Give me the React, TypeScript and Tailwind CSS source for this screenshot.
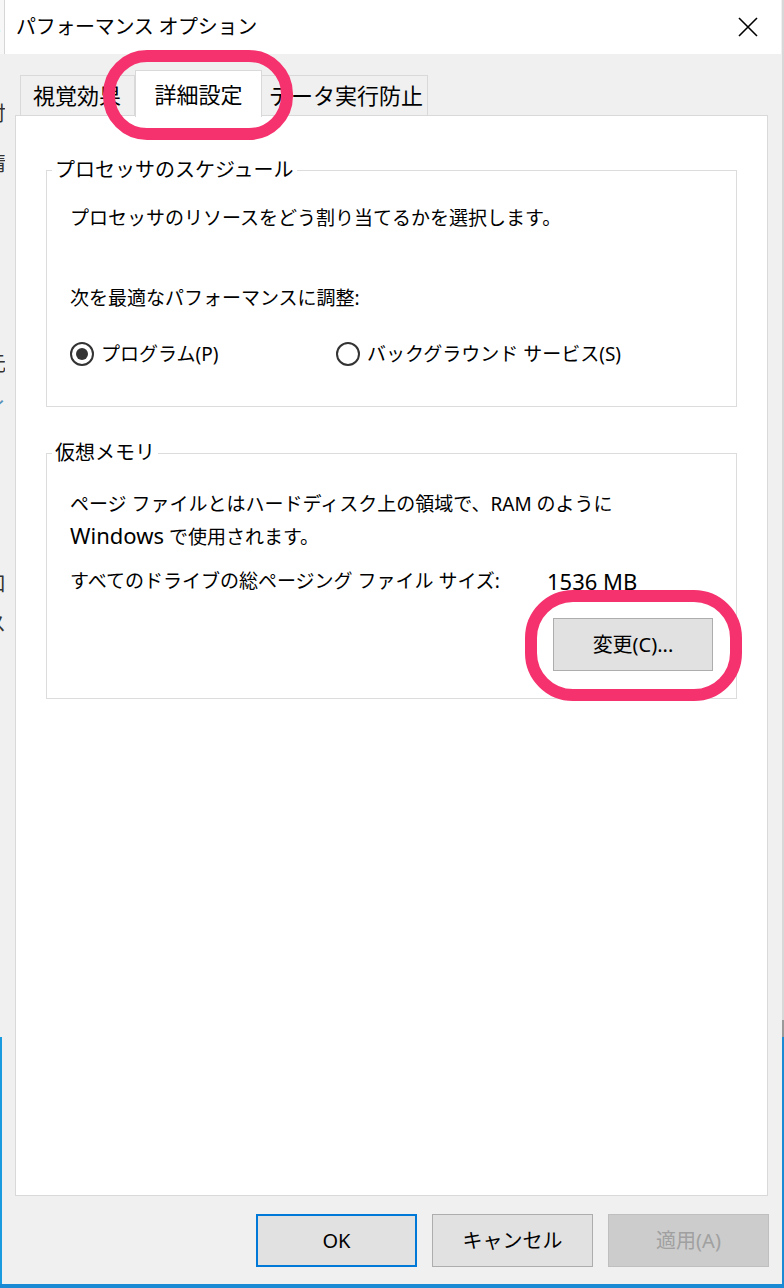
import React from "react";

const font = { fontFamily: '"Noto Sans", "Noto Sans CJK JP", sans-serif' };

function Radio({ checked, label }: { checked?: boolean; label: string }) {
  return (
    <div className="flex items-center gap-[7px]">
      <span className="w-[24px] h-[24px] rounded-full border-2 border-[#333333] bg-white flex items-center justify-center">
        {checked && <span className="w-[12px] h-[12px] rounded-full bg-[#333333]" />}
      </span>
      <span className="whitespace-nowrap">{label}</span>
    </div>
  );
}

function Group({ title, children, className }: { title: string; children: React.ReactNode; className?: string }) {
  return (
    <fieldset className={"border border-[#dcdcdc] mx-[30px] px-[23px] " + (className ?? "")}>
      <legend className="-ml-[18px] px-[3px] text-[20px] leading-[28px] bg-white whitespace-nowrap">{title}</legend>
      {children}
    </fieldset>
  );
}

function DlgButton({ children, variant }: { children: React.ReactNode; variant?: "default" | "disabled" }) {
  const cls =
    variant === "default"
      ? "border-2 border-[#0078d7] bg-[#e1e1e1] text-black"
      : variant === "disabled"
      ? "border border-[#bfbfbf] bg-[#cccccc] text-[#a0a0a0]"
      : "border border-[#adadad] bg-[#e1e1e1] text-black";
  return (
    <div className={"w-[161px] h-[53px] flex items-center justify-center text-[20px] " + cls}>{children}</div>
  );
}

export default function App() {
  return (
    <div className="w-[784px] h-[1288px] flex flex-col overflow-hidden bg-[#f0f0f0] text-black" style={font}>
      <div className="flex flex-row h-[1284px]">
        {/* background window peeking on the left */}
        <div className="w-[5px] flex flex-col">
          <div className="h-[54px] bg-[#f7f7f7] border-r border-[#d6d6d6] overflow-hidden flex items-center">
            <span className="text-[14px] leading-none -ml-[3px]">.</span>
          </div>
          <div className="h-[983px] bg-[#f0f0f0] overflow-hidden flex flex-col text-[20px] leading-[20px] text-[#333]">
            <span className="h-[50px]" />
            <span className="-ml-[14px]">付</span>
            <span className="h-[30px]" />
            <span className="-ml-[14px]">情</span>
            <span className="h-[180px]" />
            <span className="-ml-[14px]">元</span>
            <span className="h-[25px]" />
            <span className="-ml-[14px] text-[#5a8fb8]">イ</span>
            <span className="h-[155px]" />
            <span className="-ml-[14px]">口</span>
            <span className="h-[20px]" />
            <span className="-ml-[14px]">ス</span>
          </div>
          <div className="flex-1 bg-[#f0f0f0] border-l-2 border-[#1a9be0]" />
        </div>

        {/* dialog */}
        <div className="w-[776px] flex flex-col">
          {/* title bar */}
          <div className="h-[54px] bg-white flex items-center justify-between pl-[11px] pr-[23px]">
            <span className="text-[20px] tracking-[-0.3px] whitespace-nowrap">パフォーマンス オプション</span>
            <svg width="20" height="20" viewBox="0 0 20 20" fill="none" stroke="#000" strokeWidth="1.6">
              <path d="M1 1 L19 19 M19 1 L1 19" />
            </svg>
          </div>

          <div className="flex-1 flex flex-col relative">
            {/* tab strip */}
            <div className="h-[61px] flex items-end pl-[15px] text-[22px]">
              <div className="w-[115px] h-[40px] border border-b-0 border-[#d9d9d9] bg-[#f0f0f0] flex items-center pl-[12px] whitespace-nowrap">
                視覚効果
              </div>
              <div className="w-[127px] h-[47px] border border-b-0 border-[#d9d9d9] bg-white flex items-center justify-center -mb-[2px] relative z-10 whitespace-nowrap">
                詳細設定
              </div>
              <div className="w-[166px] h-[40px] border border-b-0 border-l-0 border-[#d9d9d9] bg-[#f0f0f0] flex items-center pl-[7px] whitespace-nowrap">
                データ実行防止
              </div>
            </div>

            {/* tab panel */}
            <div className="ml-[10px] w-[753px] h-[1081px] border border-[#d9d9d9] bg-white text-[19px] flex flex-col">
              <Group title="プロセッサのスケジュール" className="mt-[40px] h-[251px]">
                <div className="mt-[20px] leading-[28px] whitespace-nowrap">プロセッサのリソースをどう割り当てるかを選択します。</div>
                <div className="mt-[52px] leading-[28px] whitespace-nowrap">次を最適なパフォーマンスに調整:</div>
                <div className="mt-[28px] h-[28px] flex items-center">
                  <div className="w-[266px]">
                    <Radio checked label="プログラム(P)" />
                  </div>
                  <Radio label="バックグラウンド サービス(S)" />
                </div>
              </Group>

              <Group title="仮想メモリ" className="mt-[32px] h-[260px]">
                <div className="mt-[21px] leading-[33px] whitespace-nowrap">
                  ページ ファイルとはハードディスク上の領域で、RAM のように
                  <br />
                  <span className="text-[22px] leading-none">Windows</span> で使用されます。
                </div>
                <div className="mt-[13px] h-[28px] flex items-center whitespace-nowrap">
                  <span className="w-[477px]">すべてのドライブの総ページング ファイル サイズ:</span>
                  <span className="text-[22px] leading-none">1536 MB</span>
                </div>
                <div className="mt-[23px] flex justify-end">
                  <div className="w-[160px] h-[53px] border border-[#adadad] bg-[#e1e1e1] flex items-center justify-center text-[20px] whitespace-nowrap">
                    変更(C)...
                  </div>
                </div>
              </Group>
            </div>

            {/* bottom buttons */}
            <div className="mt-[18px] flex justify-end gap-[15px] pr-[12px]">
              <DlgButton variant="default">OK</DlgButton>
              <DlgButton>キャンセル</DlgButton>
              <DlgButton variant="disabled">適用(A)</DlgButton>
            </div>

            {/* annotation highlights */}
            <div className="absolute left-[98px] top-[-4px] w-[190px] h-[90px] rounded-[44px] border-[12px] border-[#f5326e] z-20 pointer-events-none" />
            <div className="absolute left-[520px] top-[536px] w-[217px] h-[111px] rounded-[48px] border-[12px] border-[#f5326e] z-20 pointer-events-none" />
          </div>
        </div>

        {/* right edge */}
        <div className="w-[3px] flex flex-col">
          <div className="h-[1020px] bg-[#f0f0f0] border-r-2 border-[#d8d8d8]" />
          <div className="h-[17px] bg-[#f0f0f0] border-r-2 border-[#9a9a9a]" />
          <div className="flex-1 bg-[#f0f0f0] border-r-2 border-[#1a8ad4]" />
        </div>
      </div>
      <div className="h-[4px] bg-[#1a8ad4]" />
    </div>
  );
}
